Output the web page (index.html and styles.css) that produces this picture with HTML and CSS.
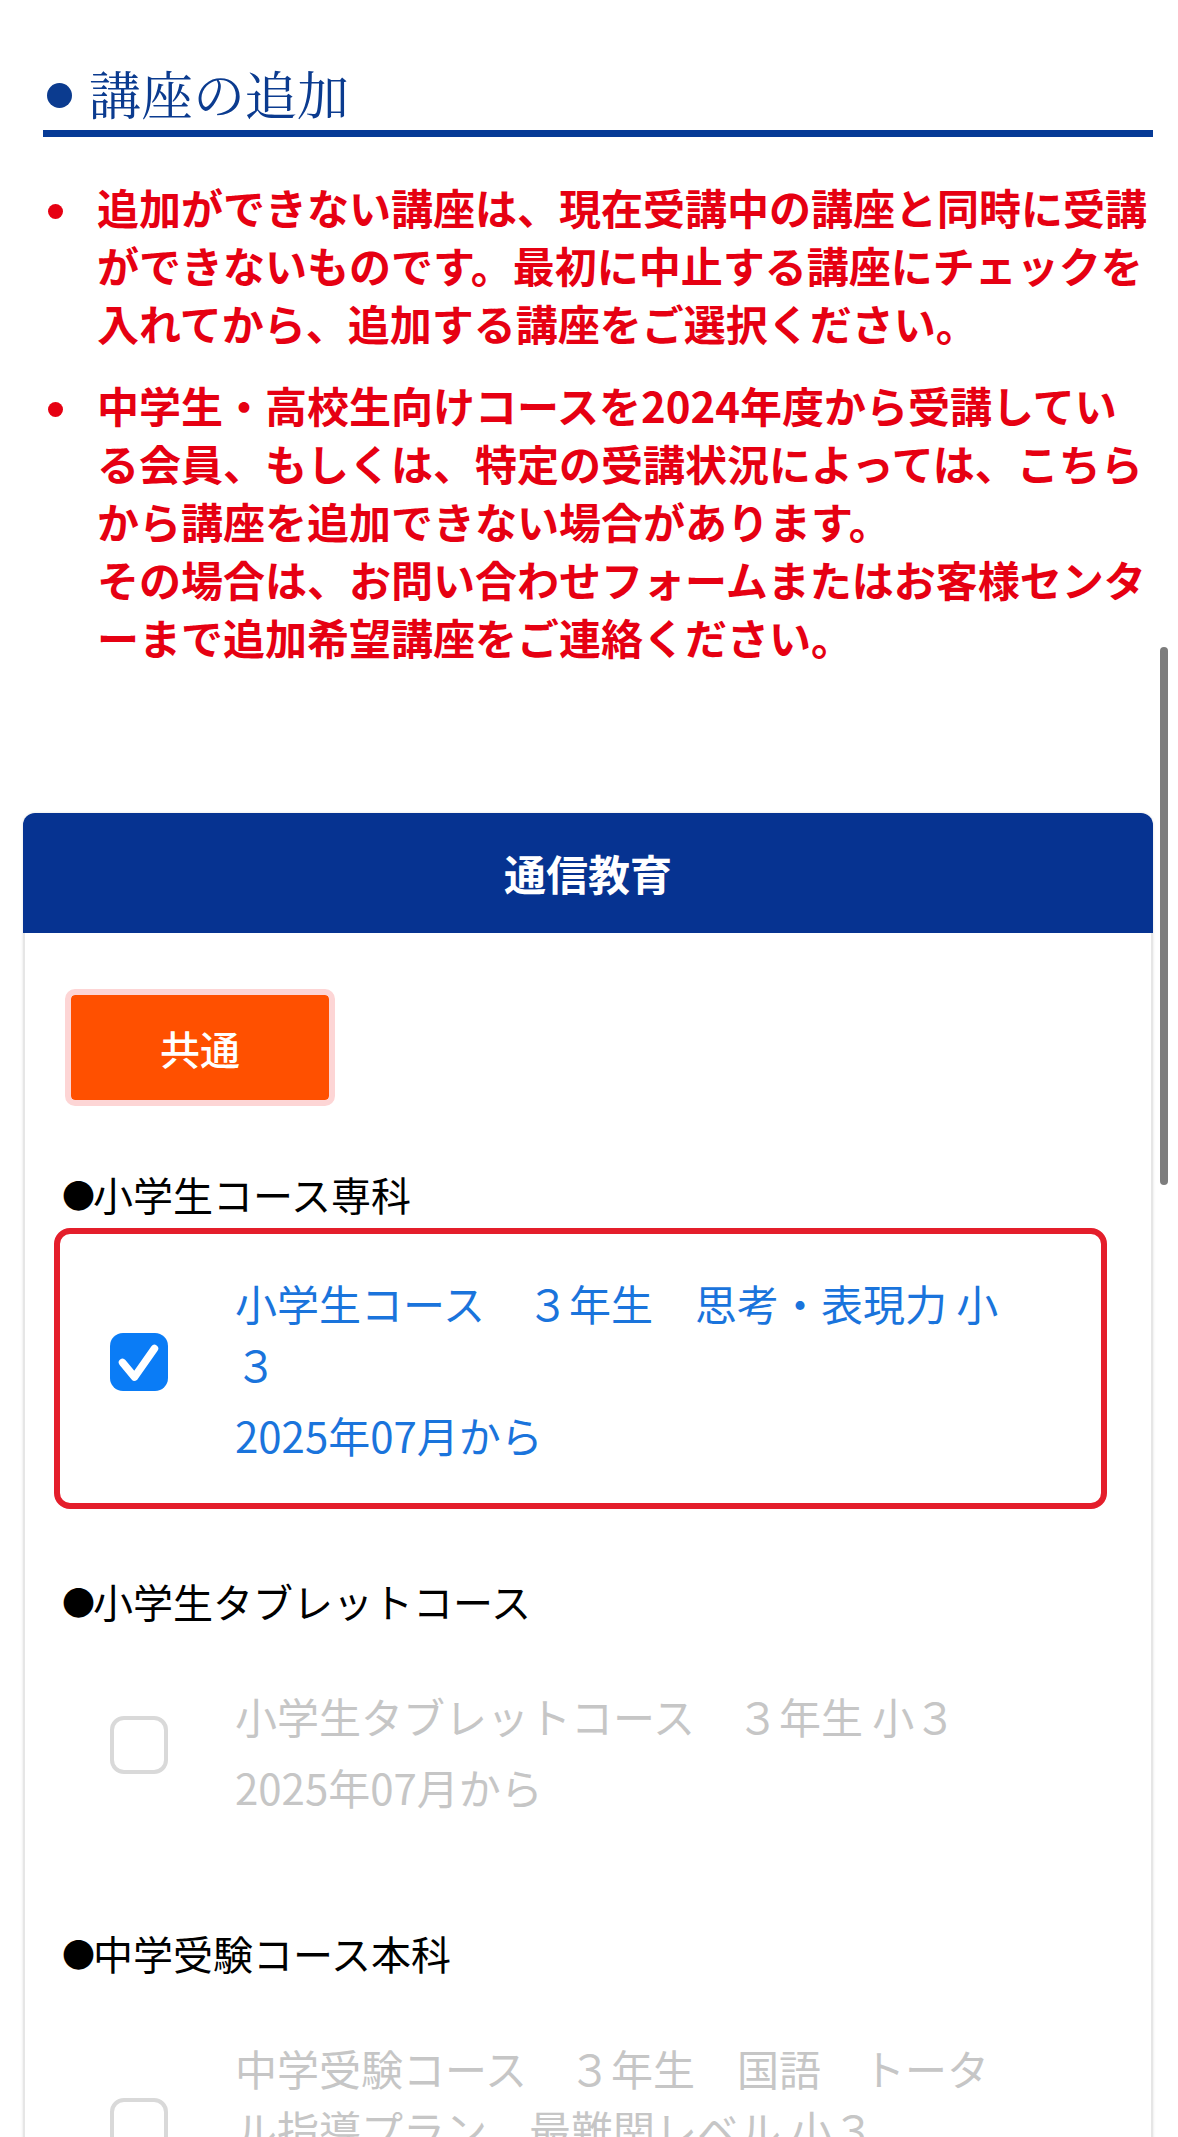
FILE: index.html
```html
<!DOCTYPE html>
<html lang="ja">
<head>
<meta charset="utf-8">
<title>講座の追加</title>
<link rel="stylesheet" href="styles.css">
</head>
<body>
<main class="page">
  <h2 class="sec-title">講座の追加</h2>
  <ul class="notes">
    <li class="note"><span class="note-text">追加ができない講座は、現在受講中の講座と同時に受講ができないものです。最初に中止する講座にチェックを入れてから、追加する講座をご選択ください。</span></li>
    <li class="note"><span class="note-text">中学生・高校生向けコースを2024年度から受講している会員、もしくは、特定の受講状況によっては、こちらから講座を追加できない場合があります。<br>その場合は、お問い合わせフォームまたはお客様センターまで追加希望講座をご連絡ください。</span></li>
  </ul>

  <section class="card">
    <div class="card-head">通信教育</div>
    <div class="card-body">
      <button class="tab" type="button">共通</button>

      <div class="group">
        <p class="group-label"><span class="mark">●</span>小学生コース専科</p>
        <label class="course is-checked">
          <span class="box">
            <svg viewBox="0 0 58 58" width="58" height="58" aria-hidden="true">
              <rect x="0" y="0" width="58" height="58" rx="13" fill="#0a7cf6"/>
              <path d="M12.5 29.5 L24.5 44 L44.5 15.5" fill="none" stroke="#fff" stroke-width="7.5" stroke-linecap="round" stroke-linejoin="round"/>
            </svg>
          </span>
          <span class="course-text">
            <span class="course-name">小学生コース　３年生　思考・表現力 小３</span>
            <span class="course-date">2025年07月から</span>
          </span>
        </label>
      </div>

      <div class="group">
        <p class="group-label"><span class="mark">●</span>小学生タブレットコース</p>
        <label class="course is-disabled">
          <span class="box box-empty"></span>
          <span class="course-text">
            <span class="course-name">小学生タブレットコース　３年生 小３</span>
            <span class="course-date">2025年07月から</span>
          </span>
        </label>
      </div>

      <div class="group">
        <p class="group-label"><span class="mark">●</span>中学受験コース本科</p>
        <label class="course is-disabled">
          <span class="box box-empty"></span>
          <span class="course-text">
            <span class="course-name">中学受験コース　３年生　国語　トータル指導プラン　最難関レベル 小３</span>
            <span class="course-date">2025年07月から</span>
          </span>
        </label>
      </div>
    </div>
  </section>
</main>
<div class="scroll-indicator" aria-hidden="true"></div>
</body>
</html>
```

FILE: styles.css
```css
html, body {
  margin: 0;
  padding: 0;
  background: #ffffff;
}

body {
  font-family: "Noto Sans CJK JP", "Noto Sans", sans-serif;
  color: #000;
  line-break: normal;
}

.page {
  padding: 63px 25px 80px 23px;
}

/* ---- section title ---- */
.sec-title {
  display: flex;
  align-items: center;
  margin: 0 0 0 20px;
  padding: 0 0 7px 0;
  height: 60px;
  font-family: "Noto Serif CJK JP", "Noto Serif JP", "IPAMincho", "Liberation Serif", "Noto Sans CJK JP", serif;
  font-weight: 400;
  font-size: 52px;
  line-height: 60px;
  color: #0b3b8f;
  border-bottom: 7px solid #063a96;
}

.sec-title::before {
  content: "";
  width: 25px;
  height: 25px;
  border-radius: 50%;
  background: #0b3b8f;
  margin: 4px 17px 0 4px;
  flex: none;
}

/* ---- red notes ---- */
.notes {
  list-style: none;
  margin: 41px 0 0 0;
  padding: 0;
}

.note {
  display: flex;
  align-items: flex-start;
  color: #e60012;
  font-weight: 700;
  font-size: 42px;
  line-height: 58px;
}

.note + .note {
  margin-top: 24px;
}

.note::before {
  content: "";
  flex: none;
  width: 15px;
  height: 15px;
  border-radius: 50%;
  background: #e60012;
  margin: 26px 34px 0 25px;
}

.note-text {
  width: 1052px;
}

/* ---- card ---- */
.card {
  margin-top: 147px;
  border-radius: 12px 12px 0 0;
  box-shadow: 0 0 3px rgba(0, 0, 0, 0.12);
}

.card-head {
  height: 120px;
  line-height: 120px;
  background: #063391;
  color: #fff;
  text-align: center;
  font-size: 42px;
  font-weight: 700;
  border-radius: 12px 12px 0 0;
}

.card-body {
  border-left: 2px solid #e6e6e6;
  border-right: 2px solid #e6e6e6;
  padding: 56px 44px 60px 29px;
}

.tab {
  display: block;
  margin: 0 0 58px 11px;
  width: 270px;
  height: 117px;
  box-sizing: border-box;
  border: 6px solid #fdd5d5;
  border-radius: 10px;
  background: #ff5000;
  background-clip: padding-box;
  color: #fff;
  font-family: "Noto Sans CJK JP", sans-serif;
  font-size: 40px;
  font-weight: 500;
  padding: 0;
  cursor: pointer;
}

.group + .group {
  margin-top: 62px;
}

.group-label {
  margin: 0 0 4px 11px;
  font-size: 40px;
  line-height: 60px;
  font-weight: 400;
  color: #000;
}

.mark {
  display: inline-block;
  font-size: 33px;
  width: 28px;
  vertical-align: 3px;
  letter-spacing: 0;
  text-indent: -3px;
}

/* ---- course item ---- */
.course {
  display: flex;
  align-items: center;
  border: 6px solid transparent;
  border-radius: 16px;
  padding: 38px 81px 38px 50px;
  cursor: pointer;
}

.course.is-checked {
  border-color: #e41e2b;
}

.course.is-disabled {
  padding-top: 44px;
}

.box {
  flex: none;
  width: 58px;
  height: 58px;
  margin: 0 67px 13px 0;
  box-sizing: border-box;
}

.box svg {
  display: block;
}

.box-empty {
  border: 4px solid #d9d9d9;
  border-radius: 14px;
  background: #fff;
}

.course-text {
  display: flex;
  flex-direction: column;
  width: 785px;
  font-size: 42px;
  line-height: 61px;
  color: #1a74dc;
}

.course.is-disabled .course-text {
  color: #c6c6c6;
}

.course-date {
  margin-top: 10px;
}

/* iOS style scroll indicator overlay */
.scroll-indicator {
  position: fixed;
  top: 647px;
  right: 10px;
  width: 8px;
  height: 538px;
  border-radius: 4px;
  background: #7d7d7d;
}
```
